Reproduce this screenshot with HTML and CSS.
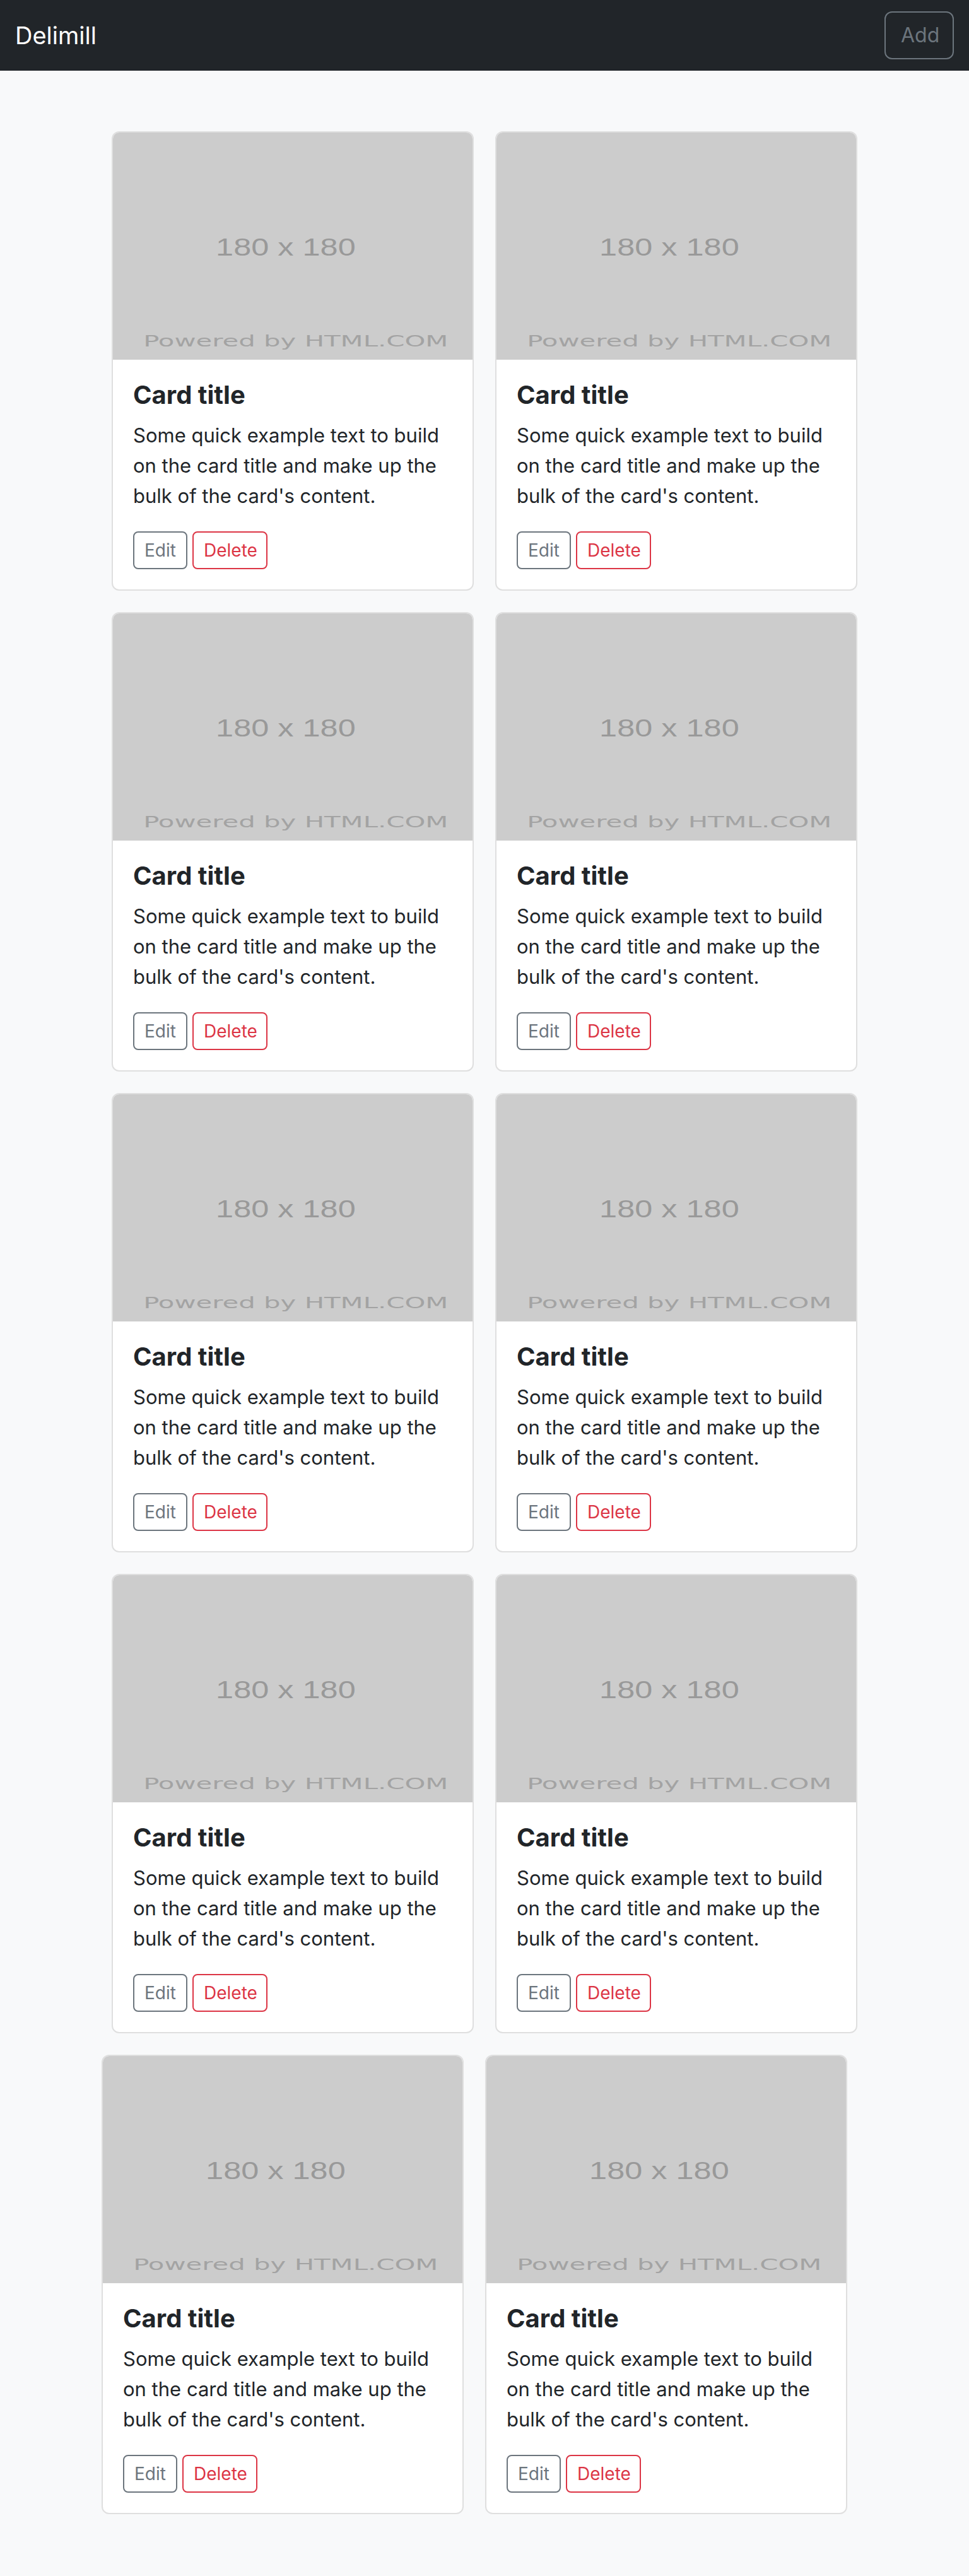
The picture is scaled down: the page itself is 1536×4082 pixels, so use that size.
FILE: index.html
```html
<!DOCTYPE html>
<html lang="en">
<head>
<meta charset="utf-8">
<title>Delimill</title>
<link rel="stylesheet" href="styles.css">
</head>
<body>
<nav class="navbar">
  <span class="brand">Delimill</span>
  <button class="btn btn-add">Add</button>
</nav>
<main class="main">
  <div class="row">
    <div class="card">
      <svg class="card-img" viewBox="0 0 180 180" preserveAspectRatio="none"><rect width="180" height="180" fill="#cccccc"/><text class="ph-size" x="86.5" y="97.5" text-anchor="middle" textLength="70" lengthAdjust="spacingAndGlyphs">180 x 180</text><text class="ph-by" x="15.2" y="169.3" textLength="152.6" lengthAdjust="spacingAndGlyphs">Powered by HTML.COM</text></svg>
      <div class="card-body"><h5 class="card-title">Card title</h5><p class="card-text">Some quick example text to build on the card title and make up the bulk of the card's content.</p><div class="actions"><button class="btn btn-edit">Edit</button><button class="btn btn-delete">Delete</button></div></div>
    </div>
    <div class="card">
      <svg class="card-img" viewBox="0 0 180 180" preserveAspectRatio="none"><rect width="180" height="180" fill="#cccccc"/><text class="ph-size" x="86.5" y="97.5" text-anchor="middle" textLength="70" lengthAdjust="spacingAndGlyphs">180 x 180</text><text class="ph-by" x="15.2" y="169.3" textLength="152.6" lengthAdjust="spacingAndGlyphs">Powered by HTML.COM</text></svg>
      <div class="card-body"><h5 class="card-title">Card title</h5><p class="card-text">Some quick example text to build on the card title and make up the bulk of the card's content.</p><div class="actions"><button class="btn btn-edit">Edit</button><button class="btn btn-delete">Delete</button></div></div>
    </div>
  </div>
  <div class="row">
    <div class="card">
      <svg class="card-img" viewBox="0 0 180 180" preserveAspectRatio="none"><rect width="180" height="180" fill="#cccccc"/><text class="ph-size" x="86.5" y="97.5" text-anchor="middle" textLength="70" lengthAdjust="spacingAndGlyphs">180 x 180</text><text class="ph-by" x="15.2" y="169.3" textLength="152.6" lengthAdjust="spacingAndGlyphs">Powered by HTML.COM</text></svg>
      <div class="card-body"><h5 class="card-title">Card title</h5><p class="card-text">Some quick example text to build on the card title and make up the bulk of the card's content.</p><div class="actions"><button class="btn btn-edit">Edit</button><button class="btn btn-delete">Delete</button></div></div>
    </div>
    <div class="card">
      <svg class="card-img" viewBox="0 0 180 180" preserveAspectRatio="none"><rect width="180" height="180" fill="#cccccc"/><text class="ph-size" x="86.5" y="97.5" text-anchor="middle" textLength="70" lengthAdjust="spacingAndGlyphs">180 x 180</text><text class="ph-by" x="15.2" y="169.3" textLength="152.6" lengthAdjust="spacingAndGlyphs">Powered by HTML.COM</text></svg>
      <div class="card-body"><h5 class="card-title">Card title</h5><p class="card-text">Some quick example text to build on the card title and make up the bulk of the card's content.</p><div class="actions"><button class="btn btn-edit">Edit</button><button class="btn btn-delete">Delete</button></div></div>
    </div>
  </div>
  <div class="row">
    <div class="card">
      <svg class="card-img" viewBox="0 0 180 180" preserveAspectRatio="none"><rect width="180" height="180" fill="#cccccc"/><text class="ph-size" x="86.5" y="97.5" text-anchor="middle" textLength="70" lengthAdjust="spacingAndGlyphs">180 x 180</text><text class="ph-by" x="15.2" y="169.3" textLength="152.6" lengthAdjust="spacingAndGlyphs">Powered by HTML.COM</text></svg>
      <div class="card-body"><h5 class="card-title">Card title</h5><p class="card-text">Some quick example text to build on the card title and make up the bulk of the card's content.</p><div class="actions"><button class="btn btn-edit">Edit</button><button class="btn btn-delete">Delete</button></div></div>
    </div>
    <div class="card">
      <svg class="card-img" viewBox="0 0 180 180" preserveAspectRatio="none"><rect width="180" height="180" fill="#cccccc"/><text class="ph-size" x="86.5" y="97.5" text-anchor="middle" textLength="70" lengthAdjust="spacingAndGlyphs">180 x 180</text><text class="ph-by" x="15.2" y="169.3" textLength="152.6" lengthAdjust="spacingAndGlyphs">Powered by HTML.COM</text></svg>
      <div class="card-body"><h5 class="card-title">Card title</h5><p class="card-text">Some quick example text to build on the card title and make up the bulk of the card's content.</p><div class="actions"><button class="btn btn-edit">Edit</button><button class="btn btn-delete">Delete</button></div></div>
    </div>
  </div>
  <div class="row">
    <div class="card">
      <svg class="card-img" viewBox="0 0 180 180" preserveAspectRatio="none"><rect width="180" height="180" fill="#cccccc"/><text class="ph-size" x="86.5" y="97.5" text-anchor="middle" textLength="70" lengthAdjust="spacingAndGlyphs">180 x 180</text><text class="ph-by" x="15.2" y="169.3" textLength="152.6" lengthAdjust="spacingAndGlyphs">Powered by HTML.COM</text></svg>
      <div class="card-body"><h5 class="card-title">Card title</h5><p class="card-text">Some quick example text to build on the card title and make up the bulk of the card's content.</p><div class="actions"><button class="btn btn-edit">Edit</button><button class="btn btn-delete">Delete</button></div></div>
    </div>
    <div class="card">
      <svg class="card-img" viewBox="0 0 180 180" preserveAspectRatio="none"><rect width="180" height="180" fill="#cccccc"/><text class="ph-size" x="86.5" y="97.5" text-anchor="middle" textLength="70" lengthAdjust="spacingAndGlyphs">180 x 180</text><text class="ph-by" x="15.2" y="169.3" textLength="152.6" lengthAdjust="spacingAndGlyphs">Powered by HTML.COM</text></svg>
      <div class="card-body"><h5 class="card-title">Card title</h5><p class="card-text">Some quick example text to build on the card title and make up the bulk of the card's content.</p><div class="actions"><button class="btn btn-edit">Edit</button><button class="btn btn-delete">Delete</button></div></div>
    </div>
  </div>
  <div class="row row-last">
    <div class="card">
      <svg class="card-img" viewBox="0 0 180 180" preserveAspectRatio="none"><rect width="180" height="180" fill="#cccccc"/><text class="ph-size" x="86.5" y="97.5" text-anchor="middle" textLength="70" lengthAdjust="spacingAndGlyphs">180 x 180</text><text class="ph-by" x="15.2" y="169.3" textLength="152.6" lengthAdjust="spacingAndGlyphs">Powered by HTML.COM</text></svg>
      <div class="card-body"><h5 class="card-title">Card title</h5><p class="card-text">Some quick example text to build on the card title and make up the bulk of the card's content.</p><div class="actions"><button class="btn btn-edit">Edit</button><button class="btn btn-delete">Delete</button></div></div>
    </div>
    <div class="card">
      <svg class="card-img" viewBox="0 0 180 180" preserveAspectRatio="none"><rect width="180" height="180" fill="#cccccc"/><text class="ph-size" x="86.5" y="97.5" text-anchor="middle" textLength="70" lengthAdjust="spacingAndGlyphs">180 x 180</text><text class="ph-by" x="15.2" y="169.3" textLength="152.6" lengthAdjust="spacingAndGlyphs">Powered by HTML.COM</text></svg>
      <div class="card-body"><h5 class="card-title">Card title</h5><p class="card-text">Some quick example text to build on the card title and make up the bulk of the card's content.</p><div class="actions"><button class="btn btn-edit">Edit</button><button class="btn btn-delete">Delete</button></div></div>
    </div>
  </div>
</main>
</body>
</html>
```
FILE: styles.css
```css
* { box-sizing: border-box; }
html, body { margin: 0; padding: 0; }
body {
  background: #f8f9fa;
  color: #212529;
  font-family: Inter, "Noto Sans", "Liberation Sans", sans-serif;
  font-size: 32px;
  line-height: 1.5;
}
.navbar {
  height: 112px;
  background: #212529;
  display: flex;
  align-items: center;
  justify-content: space-between;
  padding: 0 24px;
}
.brand {
  color: #fff;
  font-size: 38px;
  line-height: 1.5;
  font-weight: 400;
}
.btn {
  font-family: inherit;
  background: transparent;
  cursor: pointer;
  display: inline-block;
}
.btn-add {
  height: 76px;
  width: 110px;
  padding: 0 24px;
  font-size: 32px;
  line-height: 1.5;
  color: #6c757d;
  border: 2px solid #6c757d;
  border-radius: 12px;
}
.main {
  display: flex;
  flex-direction: column;
  gap: 34px;
  padding: 96px 0 98px;
}
.row {
  display: flex;
  justify-content: center;
  gap: 34px;
}
.row-last { padding-right: 32px; }
.card {
  width: 574px;
  background: #fff;
  border: 2px solid rgba(0, 0, 0, 0.125);
  border-radius: 12px;
  overflow: hidden;
  display: flex;
  flex-direction: column;
}
.card-img {
  display: block;
  width: 100%;
  height: 360px;
}
.ph-size {
  font-family: "Liberation Sans", Arial, sans-serif;
  font-size: 19px;
  fill: #999999;
}
.ph-by {
  font-family: "DejaVu Sans", sans-serif;
  font-size: 12px;
  fill: #a3a3a3;
}
.card-body {
  padding: 32px;
}
.card-title {
  margin: 0 0 16px;
  font-size: 40px;
  line-height: 48px;
  font-weight: 700;
  color: #212529;
}
.card-text {
  margin: 0 0 32px;
  font-size: 31px;
  line-height: 48px;
  color: #212529;
}
.actions {
  display: flex;
  gap: 8px;
}
.btn-edit, .btn-delete {
  height: 60px;
  padding: 0 16px;
  font-size: 28px;
  line-height: 1.5;
  border-radius: 8px;
  border: 2px solid;
}
.btn-edit { color: #6c757d; border-color: #6c757d; width: 86px; }
.btn-delete { color: #dc3545; border-color: #dc3545; width: 119px; }
```
